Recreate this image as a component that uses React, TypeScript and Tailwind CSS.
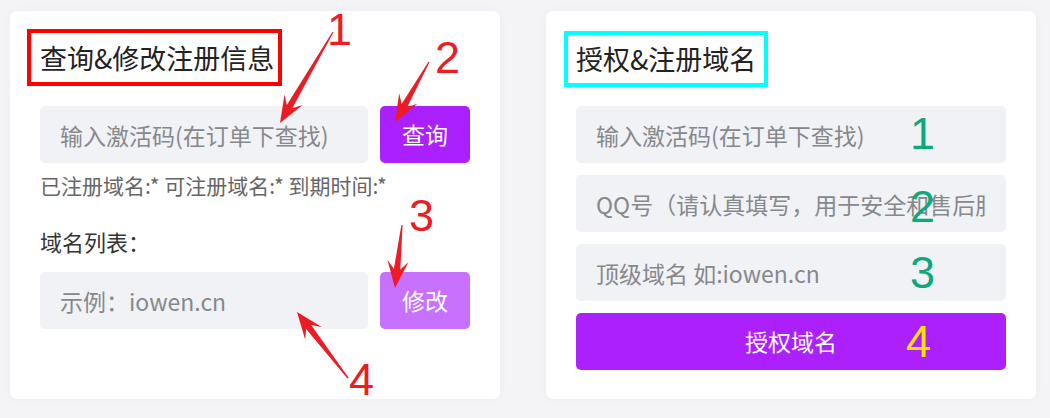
import React from 'react';

const font = { fontFamily: '"Noto Sans CJK SC", "Noto Sans", sans-serif' };

type Pt = [number, number];

function arrowPoints(tail: Pt, tip: Pt): string {
    const [x1, y1] = tail;
    const [x2, y2] = tip;
    const dx = x2 - x1;
    const dy = y2 - y1;
    const len = Math.hypot(dx, dy);
    const ux = dx / len;
    const uy = dy / len;
    const nx = -uy;
    const ny = ux;
    const headLen = 27;
    const neckLen = 19;
    const p = (bx: number, by: number, along: number, side: number): string =>
        `${(bx + ux * along + nx * side).toFixed(1)},${(by + uy * along + ny * side).toFixed(1)}`;
    return [
        p(x1, y1, 0, 0.6),
        p(x2, y2, -neckLen, 3.2),
        p(x2, y2, -headLen, 10.5),
        p(x2, y2, 0, 0),
        p(x2, y2, -headLen, -10.5),
        p(x2, y2, -neckLen, -3.2),
        p(x1, y1, 0, -0.6),
    ].join(' ');
}

const arrows: { tail: Pt; tip: Pt }[] = [
    { tail: [333, 32], tip: [280, 123] },
    { tail: [429, 62], tip: [395, 122] },
    { tail: [402, 225], tip: [395, 288] },
    { tail: [348, 378], tip: [297, 312] },
];

const redDigits = [
    { n: '1', x: 327, y: 45 },
    { n: '2', x: 435, y: 73 },
    { n: '3', x: 409, y: 231 },
    { n: '4', x: 349, y: 395 },
];

const sideDigits = [
    { n: '1', x: 910, y: 149, color: '#0fa87b' },
    { n: '2', x: 910, y: 222, color: '#0fa87b' },
    { n: '3', x: 910, y: 288, color: '#0fa87b' },
    { n: '4', x: 906, y: 357, color: '#ffe100' },
];

function Field({ placeholder, grow = false }: { placeholder: string; grow?: boolean }) {
    return (
        <input
            placeholder={placeholder}
            className={`h-[57px] w-full min-w-0 shrink-0 rounded-[5px] bg-[#f1f2f6] px-[20px] text-[23px] text-[#333] outline-none placeholder:text-[#86888c] ${grow ? 'flex-1' : ''}`}
            style={font}
        />
    );
}

export default function App() {
    return (
        <div className="relative h-[418px] w-[1050px] overflow-hidden bg-[#f4f4f6]" style={font}>
            <div className="flex gap-[46px] pl-[10px] pt-[11px]">
                {/* 查询 & 修改 */}
                <div className="flex h-[388px] w-[490px] flex-col rounded-[7px] bg-white px-[30px] pt-[18px] shadow-[0_0_12px_rgba(0,0,0,0.03)]">
                    <div className="-ml-[13px] self-start border-4 border-[#ff0000] pl-[9px] pr-[4px]">
                        <h2 className="text-[27px] leading-[49px] text-[#222]">查询&amp;修改注册信息</h2>
                    </div>
                    <div className="mt-[20px] flex gap-[12px]">
                        <Field placeholder="输入激活码(在订单下查找)" grow />
                        <button className="h-[57px] w-[90px] shrink-0 rounded-[5px] bg-[#aa20fe] text-[23px] text-white">
                            查询
                        </button>
                    </div>
                    <p className="mt-[8px] text-[21px] leading-[28px] text-[#666]">
                        已注册域名:* 可注册域名:* 到期时间:*
                    </p>
                    <p className="mt-[27px] text-[22px] leading-[30px] text-[#333]">域名列表：</p>
                    <div className="mt-[16px] flex gap-[12px]">
                        <Field placeholder="示例：iowen.cn" grow />
                        <button className="h-[57px] w-[90px] shrink-0 rounded-[5px] bg-[#c870ff] text-[23px] text-white">
                            修改
                        </button>
                    </div>
                </div>

                {/* 授权 & 注册 */}
                <div className="flex h-[388px] w-[490px] flex-col rounded-[7px] bg-white px-[30px] pt-[20px] shadow-[0_0_12px_rgba(0,0,0,0.03)]">
                    <div className="-ml-[12px] self-start border-4 border-[#00ffff] pl-[8px] pr-[8px]">
                        <h2 className="text-[27px] leading-[48px] text-[#222]">授权&amp;注册域名</h2>
                    </div>
                    <div className="mt-[19px] flex flex-col gap-[12px]">
                        <Field placeholder="输入激活码(在订单下查找)" />
                        <Field placeholder="QQ号（请认真填写，用于安全和售后服务）" />
                        <Field placeholder="顶级域名 如:iowen.cn" />
                        <button className="h-[57px] w-full shrink-0 rounded-[5px] bg-[#ac20fe] text-[23px] text-white">
                            授权域名
                        </button>
                    </div>
                </div>
            </div>

            {/* annotations */}
            <svg
                className="pointer-events-none absolute left-0 top-0"
                width={1050}
                height={418}
                viewBox="0 0 1050 418"
            >
                {arrows.map((a, i) => (
                    <polygon key={i} points={arrowPoints(a.tail, a.tip)} fill="#ed1c24" />
                ))}
                {redDigits.map((d) => (
                    <text
                        key={d.n}
                        x={d.x}
                        y={d.y}
                        fill="#ed1c24"
                        fontSize={45}
                        fontFamily='"Liberation Sans", sans-serif'
                    >
                        {d.n}
                    </text>
                ))}
                {sideDigits.map((d) => (
                    <text
                        key={d.n}
                        x={d.x}
                        y={d.y}
                        fill={d.color}
                        fontSize={45}
                        fontFamily='"Liberation Sans", sans-serif'
                    >
                        {d.n}
                    </text>
                ))}
            </svg>
        </div>
    );
}
